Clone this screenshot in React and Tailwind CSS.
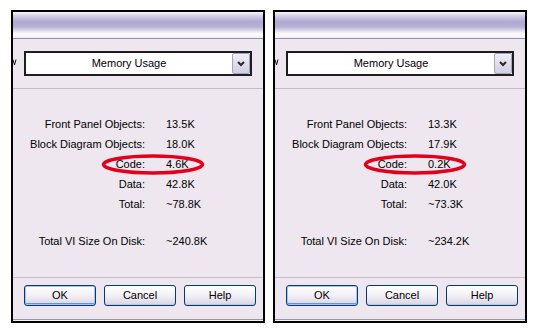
const FONT = { fontFamily: '"Liberation Sans", Arial, sans-serif' };

const LEFT = {
  rows: [
    ["Front Panel Objects:", "13.5K"],
    ["Block Diagram Objects:", "18.0K"],
    ["Code:", "4.6K"],
    ["Data:", "42.8K"],
    ["Total:", "~78.8K"],
  ],
  disk: "~240.8K",
};

const RIGHT = {
  rows: [
    ["Front Panel Objects:", "13.3K"],
    ["Block Diagram Objects:", "17.9K"],
    ["Code:", "0.2K"],
    ["Data:", "42.0K"],
    ["Total:", "~73.3K"],
  ],
  disk: "~234.2K",
};

function Chevron() {
  return (
    <svg width="8" height="6" viewBox="0 0 8 6">
      <polyline points="1,1 4,4 7,1" fill="none" stroke="#2a2a2a" strokeWidth="2" />
    </svg>
  );
}

// tail of a clipped label glyph at the window's left edge
function ClippedGlyph() {
  return (
    <svg width="11" height="25" viewBox="0 0 11 25">
      <polyline points="0,8.5 1.5,14 3,8.5" fill="none" stroke="#111" strokeWidth="1" />
    </svg>
  );
}

function XPButton({ children, isDefault }) {
  return (
    <div
      className={`w-[72px] h-[21px] flex items-center justify-center rounded-[3px] border border-[#003c74] bg-gradient-to-b from-white via-[#f2f0f6] to-[#d8d4e4] text-[11px] text-black ${
        isDefault ? "shadow-[inset_0_0_0_1px_#a8c4ee,inset_0_-2px_0_#6d8fd6]" : "shadow-[inset_0_-1px_0_#c8c4d8]"
      }`}
    >
      {children}
    </div>
  );
}

function Panel({ data }) {
  return (
    <div className="w-[254px] h-[313px] border-x-2 border-t-2 border-black flex flex-col bg-[#eee7ef] overflow-hidden">
      {/* title strip */}
      <div className="h-[27px] shrink-0 bg-[linear-gradient(to_bottom,#f6f6fa_0px,#d2cde6_4px,#aea7d0_10px,#b8b2d6_15px,#ffffff_22px,#f4f2f8_25px,#f0eef4_26px)] border-b border-[#9890a8]" />

      {/* dropdown row */}
      <div className="flex items-center mt-[12px] h-[25px]">
        <ClippedGlyph />
        <div className="w-[228px] h-[25px] border-2 border-[#1e1e1e] bg-white flex items-stretch">
          <div className="flex-1 flex items-center justify-center text-[11px] text-black">Memory Usage</div>
          <div className="w-[18px] flex items-center justify-center border border-[#a6a6ba] rounded-[2px] bg-gradient-to-b from-[#f0eef8] to-[#d2cee4]">
            <Chevron />
          </div>
        </div>
      </div>

      <div className="mt-[12px] border-t border-[#c4bccc]" />

      {/* stats */}
      <div className="relative mt-[25px] text-[11px] text-black">
        <div className="grid grid-cols-[132px_1fr] gap-x-[21px]">
          {data.rows.map(([label, value]) => (
            <div key={label} className="contents">
              <div className="text-right leading-[20px]">{label}</div>
              <div className="leading-[20px]">{value}</div>
            </div>
          ))}
          <div className="text-right leading-[20px] mt-[17px]">Total VI Size On Disk:</div>
          <div className="leading-[20px] mt-[17px]">{data.disk}</div>
        </div>
        <svg className="absolute left-[88px] top-[40px]" width="104" height="21" viewBox="0 0 104 21">
          <ellipse cx="52" cy="10.5" rx="49.5" ry="8.5" fill="none" stroke="#e3001b" strokeWidth="3.5" />
        </svg>
      </div>

      <div className="mt-auto border-t border-[#c4bccc]" />

      <div className="flex gap-[8px] pl-[11px] mt-[7px]">
        <XPButton isDefault>OK</XPButton>
        <XPButton>Cancel</XPButton>
        <XPButton>Help</XPButton>
      </div>

      <div className="mt-[13px] h-[4px] border-t border-[#9a96a8] bg-[#f4f2f6] border-b-2 border-b-black shrink-0" />
    </div>
  );
}

export default function App() {
  return (
    <div className="w-[539px] h-[333px] bg-white flex gap-[8px] pl-[11px] pt-[10px]" style={FONT}>
      <Panel data={LEFT} />
      <Panel data={RIGHT} />
    </div>
  );
}
